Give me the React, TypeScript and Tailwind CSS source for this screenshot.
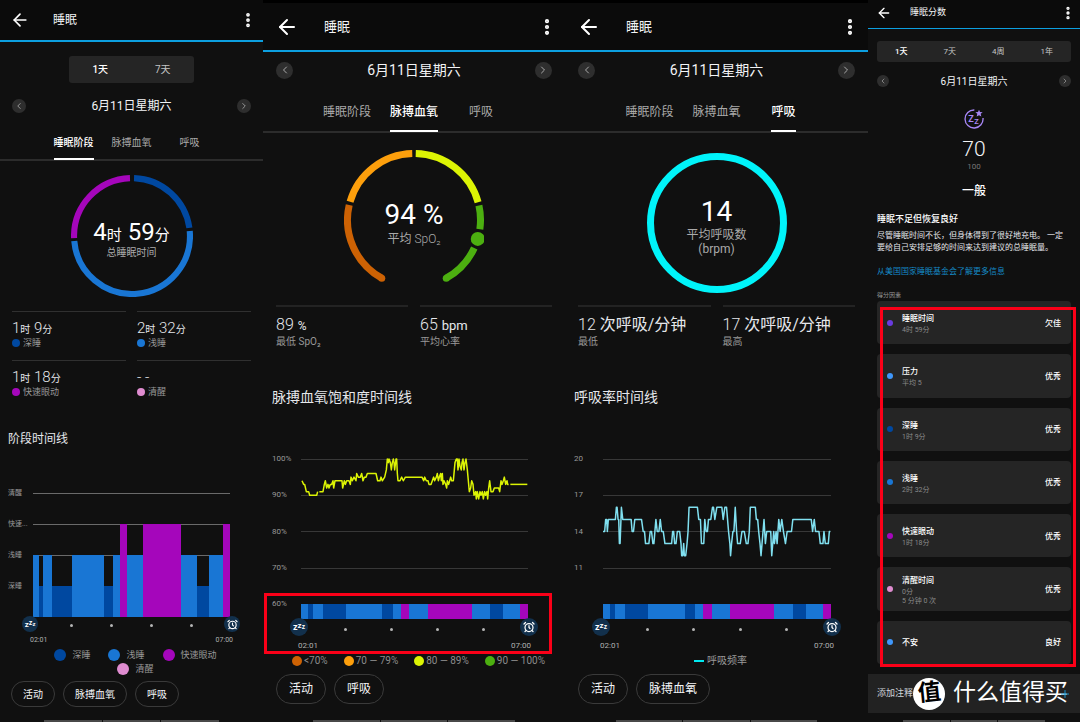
import { useState } from 'react';
import type { ReactNode } from 'react';
import clsx from 'clsx';
import { AlarmClock, ArrowLeft, ChevronLeft, ChevronRight, EllipsisVertical, Plus } from 'lucide-react';

type Size = 'sm' | 'md' | 'lg';
type Stage = 'deep' | 'light' | 'rem';

const COLORS = {
  deep: '#0048a0',
  light: '#1976d4',
  rem: '#a506bb',
  awake: '#df8cd0',
};

// [stage, end] on a 0..591 axis covering 02:01 - 07:00
const STAGES: [Stage, number][] = [
  ['light', 17],
  ['deep', 31],
  ['light', 58],
  ['deep', 117],
  ['light', 212],
  ['deep', 239],
  ['light', 260],
  ['rem', 282],
  ['light', 330],
  ['rem', 444],
  ['light', 492],
  ['deep', 527],
  ['light', 570],
  ['rem', 591],
];

const SPO2 = [
  '120,94 125,93 128,93 133,91 140,91 143,90 164,90 167,91',
  '172,91 183,91 187,93 190,94 194,92 198,93 201,92 205,93 209,93 213,94 215,92 219,94 240,94 242,92 247,94 250,93 254,94 261,94 265,93 267,95 271,94 276,95 282,94 284,96 289,95 295,95 299,96 303,94 307,95 312,95 316,96 342,96 347,94 354,94 357,95 361,94 368,95 373,97 376,100 379,99 381,100 385,99 388,97 391,99 394,100 396,99 398,97 402,100 404,100 406,96 408,94 414,94 419,95 424,94 430,95 480,95 485,94 488,95 493,94 498,94 501,93 507,93 511,94 515,95 518,94 523,95 526,96 529,94 532,95 536,96 538,94 541,96 543,93 546,94 551,93 554,92 556,94 560,93 566,95 569,94 574,94 577,97 579,99 583,100 586,100 588,97 591,100 594,98 598,97 600,99 603,100 606,97 609,99 612,100 616,97 619,94 622,91 626,92 629,94 633,93 636,90 641,91 643,89 646,91 650,89 654,91 657,90 661,91 664,89 668,91 671,90 675,91 677,89 680,92 683,94 687,91 693,91 697,92 710,92 713,91 717,94 720,93 724,94 727,95 731,93 735,94 737,93 740,93',
  '745,93 796,93',
];

const BREATHS = [
  '123,14 128,14 131,15 134,15 136,14 139,15 160,15 163,16 165,16 168,15 170,15 172,13 174,13 178,16 182,15 207,15 210,14 214,14 218,15 238,15 243,14 247,14 250,13 260,13 264,14 268,14 272,13 275,13 281,15 285,14 290,14 294,15 298,14 303,14 308,13 328,13 331,14 334,14 337,13 341,13 345,14 352,14 356,13 358,12 361,12 364,13 366,12 370,12 374,13 377,14 380,16 405,16 409,15 414,15 417,13 424,13 427,15 431,14 435,14 438,15 445,15 450,16 453,16 457,15 463,16 478,16 482,15 487,16 492,16 495,15 498,14 502,13 504,12 507,13 511,14 514,14 518,16 522,14 525,13 533,13 538,14 545,14 551,13 556,13 560,14 563,16 578,16 581,15 585,15 588,14 592,13 595,12 598,13 604,15 608,13 612,14 624,14 627,12 633,14 635,13 640,14 643,13 648,15 652,14 657,15 662,14 668,13 673,14 686,14 690,15 745,15 749,14 754,15 758,14 768,14 772,13 780,13 783,14 787,13 796,13 799,14 802,14',
];

const FACTORS = [
  { name: '睡眠时间', details: ['4时 59分'], rating: '欠佳', color: '#6a3be0' },
  { name: '压力', details: ['平均 5'], rating: '优秀', color: '#3f97fb' },
  { name: '深睡', details: ['1时 9分'], rating: '优秀', color: COLORS.deep },
  { name: '浅睡', details: ['2时 32分'], rating: '优秀', color: COLORS.light },
  { name: '快速眼动', details: ['1时 18分'], rating: '优秀', color: COLORS.rem },
  { name: '清醒时间', details: ['0分', '5 分钟 0 次'], rating: '优秀', color: COLORS.awake },
  { name: '不安', details: [], rating: '良好', color: '#3f97fb' },
];

function Screen({ children }: { children: ReactNode }) {
  return <section className="flex min-w-0 flex-col bg-[#101010]">{children}</section>;
}

function Header({ title, size }: { title: string; size: Size }) {
  return (
    <header
      className={clsx(
        'flex shrink-0 items-center border-[#0c9fe0] bg-[#0b0b0b] text-gray-100',
        size === 'lg' && 'h-[52px] border-b-2 pt-[3px] pr-2 pl-3 text-[13px] shadow-[inset_0_3px_0_#000]',
        size === 'md' && 'h-[42px] border-b-2 pr-1.5 pl-2.5 text-xs',
        size === 'sm' && 'h-[29px] border-b pr-1 pl-2 pb-[3px] text-[9px]'
      )}
    >
      <button aria-label="返回" className="text-white">
        <ArrowLeft className={clsx(size === 'lg' && 'size-6', size === 'md' && 'size-5', size === 'sm' && 'size-4')} />
      </button>
      <h1 className={clsx('flex-1', size === 'lg' && 'ml-[25px]', size === 'md' && 'ml-[23px]', size === 'sm' && 'ml-[18px]')}>
        {title}
      </h1>
      <button aria-label="更多" className="text-white">
        <EllipsisVertical
          strokeWidth={3}
          className={clsx(size === 'lg' && 'size-5', size === 'md' && 'size-[18px]', size === 'sm' && 'size-4')}
        />
      </button>
    </header>
  );
}

function Segments({ items, className }: { items: string[]; className: string }) {
  const [active, setActive] = useState(0);
  return (
    <div className={clsx('flex shrink-0 rounded-[3px] bg-[#252525]', className)}>
      {items.map((item, i) => (
        <button
          key={item}
          onClick={() => setActive(i)}
          className={clsx('flex-1', i === active ? 'font-medium text-white' : 'text-[#c4c4c4]')}
        >
          {item}
        </button>
      ))}
    </div>
  );
}

function DateRow({ size, className }: { size: Size; className: string }) {
  const round = clsx(
    'flex items-center justify-center rounded-full bg-[#2e2e2e] text-[#aaa]',
    size === 'lg' && 'size-[17px]',
    size === 'md' && 'size-[14px]',
    size === 'sm' && 'size-3'
  );
  const icon = size === 'lg' ? 'size-3' : size === 'md' ? 'size-2.5' : 'size-2';
  return (
    <div className={clsx('flex shrink-0 items-center justify-between text-gray-100', className)}>
      <button aria-label="前一天" className={round}>
        <ChevronLeft className={icon} />
      </button>
      <span>6月11日星期六</span>
      <button aria-label="后一天" className={round}>
        <ChevronRight className={icon} />
      </button>
    </div>
  );
}

function Tabs({ active, size }: { active: number; size: Size }) {
  return (
    <nav
      className={clsx(
        'mt-3 flex shrink-0 justify-center border-b-2 border-[#2c2c2c] leading-[25px]',
        size === 'lg' ? 'h-[33px] text-xs' : 'h-[31px] text-[10px]'
      )}
    >
      {['睡眠阶段', '脉搏血氧', '呼吸'].map((tab, i) => (
        <div key={tab} className={clsx('-mb-px flex justify-center', size === 'lg' ? 'w-[67px]' : 'w-[58px]')}>
          <a
            href="#"
            className={clsx(
              'border-b-2 whitespace-nowrap',
              i === active ? 'border-white font-medium text-white' : 'border-transparent text-[#aaa]'
            )}
          >
            {tab}
          </a>
        </div>
      ))}
    </nav>
  );
}

const point = (r: number, deg: number) => {
  const a = (deg * Math.PI) / 180;
  return [70 + r * Math.sin(a), 70 - r * Math.cos(a)];
};

// angles run clockwise from 12 o'clock
function Arc({ from, to, r = 66.5, width = 7, color }: { from: number; to: number; r?: number; width?: number; color: string }) {
  const [x1, y1] = point(r, from);
  const [x2, y2] = point(r, to);
  return (
    <path
      d={`M${x1} ${y1}A${r} ${r} 0 ${to - from > 180 ? 1 : 0} 1 ${x2} ${y2}`}
      fill="none"
      stroke={color}
      strokeWidth={width}
    />
  );
}

function Dial({ size, className, drawing, children }: { size: Size; className: string; drawing: ReactNode; children: ReactNode }) {
  return (
    <div className={clsx('grid shrink-0 place-items-center self-center', className)}>
      <svg viewBox="0 0 140 140" className={clsx('col-start-1 row-start-1', size === 'lg' ? 'size-[140px]' : 'size-[122px]')}>
        {drawing}
      </svg>
      <div className="col-start-1 row-start-1 flex flex-col items-center pt-[5px] text-white">{children}</div>
    </div>
  );
}

function Dot({ color, className }: { color: string; className: string }) {
  return <span className={clsx('shrink-0 rounded-full', className)} style={{ backgroundColor: color }} />;
}

function Duration({ parts }: { parts: [string, string][] }) {
  return (
    <>
      {parts.map(([n, unit], i) => (
        <span key={unit}>
          {i > 0 && ' '}
          {n}
          <span className="text-[10px] leading-none font-normal">{unit}</span>
        </span>
      ))}
    </>
  );
}

function StageStat({ value, label, color }: { value: ReactNode; label: string; color: string }) {
  return (
    <div className="border-t border-[#303030] pt-[7px]">
      <p className="text-[15px] leading-[18px] font-light whitespace-pre text-gray-200">{value}</p>
      <p className="flex items-center gap-[3px] text-[9px] leading-3 text-[#999]">
        <Dot color={color} className="size-2" />
        {label}
      </p>
    </div>
  );
}

function Stat({ value, label }: { value: ReactNode; label: string }) {
  return (
    <div className="border-t-2 border-[#232323] pt-2">
      <p className="text-base leading-5 font-light whitespace-nowrap text-gray-200">{value}</p>
      <p className="text-[10px] leading-[14px] text-[#999]">{label}</p>
    </div>
  );
}

function SleepTimes({ size }: { size: Size }) {
  const badge = clsx(
    'absolute flex items-center justify-center rounded-full bg-[#12304c] text-white',
    size === 'lg' ? '-top-px size-[18px]' : '-top-px size-4'
  );
  return (
    <>
      <div className={clsx('relative flex items-center justify-evenly', size === 'lg' ? 'h-[21px]' : 'h-[17px]')}>
        <span className={clsx(badge, '-left-[11px]')}>
          <svg viewBox="0 0 18 18" className="size-full font-bold" fill="currentColor">
            <text x="3" y="12.4" fontSize="9">z</text>
            <text x="7.6" y="9.6" fontSize="8">z</text>
            <text x="11.8" y="11" fontSize="6.5">z</text>
          </svg>
        </span>
        {[0, 1, 2, 3].map((i) => (
          <Dot key={i} color="#b5b5b5" className="size-[3px]" />
        ))}
        <span className={clsx(badge, '-right-[10px]')}>
          <AlarmClock strokeWidth={2.5} className={size === 'lg' ? 'size-3' : 'size-[11px]'} />
        </span>
      </div>
      <div className={clsx('-mx-[3px] flex justify-between leading-3 text-[#b0b0b0]', size === 'lg' ? 'text-[8px]' : 'text-[7px]')}>
        <span>02:01</span>
        <span>07:00</span>
      </div>
    </>
  );
}

function AxisLabels({ items, className }: { items: string[]; className: string }) {
  return (
    <div className={clsx('flex shrink-0 flex-col justify-between leading-[8px] text-[#999]', className)}>
      {items.map((item) => (
        <span key={item} className="h-2 whitespace-nowrap">
          {item}
        </span>
      ))}
    </div>
  );
}

function StageChart() {
  const top = { deep: 93, light: 62, rem: 31 };
  return (
    <svg viewBox="0 0 591 124" preserveAspectRatio="none" className="my-1 h-[124px] w-full min-w-0" shapeRendering="crispEdges">
      {[0, 31, 62].map((y) => (
        <rect key={y} x="0" y={y} width="591" height="1" fill="#6a6a6a" />
      ))}
      {STAGES.map(([stage, end], i) => {
        const start = i ? STAGES[i - 1][1] : 0;
        return <rect key={end} x={start} y={top[stage]} width={end - start} height={124 - top[stage]} fill={COLORS[stage]} />;
      })}
    </svg>
  );
}

function StageStrip() {
  return (
    <svg viewBox="0 0 591 15" preserveAspectRatio="none" className="block h-[15px] w-full" shapeRendering="crispEdges">
      {STAGES.map(([stage, end], i) => {
        const start = i ? STAGES[i - 1][1] : 0;
        return <rect key={end} x={start} y="0" width={end - start} height="15" fill={COLORS[stage]} />;
      })}
    </svg>
  );
}

function LineChart({ series, start, max, min, color }: { series: string[]; start: number; max: number; min: number; color: string }) {
  const toPoints = (s: string) =>
    s
      .split(' ')
      .map((p) => {
        const [x, v] = p.split(',').map(Number);
        return `${x - start},${((max - v) / (max - min)) * 145}`;
      })
      .join(' ');
  return (
    <svg viewBox="0 0 681 145" preserveAspectRatio="none" className="my-1 h-[145px] w-full min-w-0 overflow-visible">
      {[0, 36, 72, 109].map((y) => (
        <rect key={y} x="0" y={y} width="681" height="1" fill="#383838" />
      ))}
      {series.map((s) => (
        <polyline
          key={s}
          points={toPoints(s)}
          fill="none"
          stroke={color}
          strokeWidth="1.5"
          strokeLinejoin="round"
          vectorEffect="non-scaling-stroke"
        />
      ))}
    </svg>
  );
}

function Timeline({ labels, chart, marked }: { labels: string[]; chart: ReactNode; marked?: boolean }) {
  return (
    <div className="mt-12 pr-[37px] pl-[9px]">
      <div className="flex h-[153px]">
        <AxisLabels items={labels} className="w-[29px] text-[8px]" />
        {chart}
      </div>
      <div className="relative -mt-1 ml-[29px]">
        <StageStrip />
        <SleepTimes size="lg" />
        {marked && <div className="absolute -top-[11px] -right-6 -bottom-[2px] -left-[37px] border-3 border-[#fb0018]" />}
      </div>
    </div>
  );
}

function Chips({ items, size }: { items: string[]; size: Size }) {
  return (
    <div className={clsx('flex shrink-0 gap-2', size === 'lg' ? 'mt-[7px] px-[13px] text-xs' : 'mt-[5px] px-[11px] text-[10px]')}>
      {items.map((item) => (
        <button
          key={item}
          className={clsx('rounded-full border border-[#3a3a3a] text-gray-100', size === 'lg' ? 'h-[30px] px-3' : 'h-[26px] px-[11px]')}
        >
          {item}
        </button>
      ))}
    </div>
  );
}

function SystemBar() {
  return (
    <div className="mx-auto mt-auto grid h-[2px] w-2/3 grid-cols-3 gap-px">
      <span className="bg-[#484848]" />
      <span className="bg-[#484848]" />
      <span className="bg-[#484848]" />
    </div>
  );
}

function StagesScreen() {
  return (
    <Screen>
      <Header title="睡眠" size="md" />
      <Segments items={['1天', '7天']} className="mt-[14px] h-[27px] w-[125px] self-center text-[10px]" />
      <DateRow size="md" className="mt-[11px] h-6 px-3 text-xs" />
      <Tabs active={0} size="md" />
      <Dial
        size="md"
        className="mt-[14px]"
        drawing={
          <>
            <Arc from={2} to={82} color={COLORS.deep} />
            <Arc from={85} to={265} color={COLORS.light} />
            <Arc from={268} to={358} color={COLORS.rem} />
          </>
        }
      >
        <p className="text-2xl leading-7">
          4<span className="text-[15px] leading-none">时</span> 59<span className="text-[15px] leading-none">分</span>
        </p>
        <p className="text-[10px] leading-[14px] text-[#aaa]">总睡眠时间</p>
      </Dial>
      <div className="mt-[14px] grid grid-cols-2 gap-[11px] px-3">
        <StageStat value={<Duration parts={[['1', '时'], ['9', '分']]} />} label="深睡" color={COLORS.deep} />
        <StageStat value={<Duration parts={[['2', '时'], ['32', '分']]} />} label="浅睡" color={COLORS.light} />
        <StageStat value={<Duration parts={[['1', '时'], ['18', '分']]} />} label="快速眼动" color={COLORS.rem} />
        <StageStat value="- -" label="清醒" color={COLORS.awake} />
      </div>
      <h2 className="mt-8 px-2 text-xs leading-[18px] text-gray-200">阶段时间线</h2>
      <div className="mt-[41px] pr-[33px] pl-2">
        <div className="flex h-[132px]">
          <AxisLabels items={['清醒', '快速...', '浅睡', '深睡', '']} className="w-[25px] text-[7px]" />
          <StageChart />
        </div>
        <div className="-mt-1 ml-[25px]">
          <SleepTimes size="md" />
        </div>
      </div>
      <ul className="mt-[2px] flex flex-wrap justify-center gap-x-[18px] pr-7 pl-9 text-[9px] leading-[14px] text-[#999]">
        {[
          ['深睡', COLORS.deep],
          ['浅睡', COLORS.light],
          ['快速眼动', COLORS.rem],
          ['清醒', COLORS.awake],
        ].map(([label, color]) => (
          <li key={label} className="flex items-center gap-1.5">
            <Dot color={color} className="size-3" />
            {label}
          </li>
        ))}
      </ul>
      <Chips items={['活动', '脉搏血氧', '呼吸']} size="md" />
      <SystemBar />
    </Screen>
  );
}

function OxygenScreen() {
  const [capX, capY] = point(66.5, 151);
  const [capX2, capY2] = point(66.5, 209);
  const [ballX, ballY] = point(66.5, 106.5);
  return (
    <Screen>
      <Header title="睡眠" size="lg" />
      <DateRow size="lg" className="h-9 px-[13px] text-sm" />
      <Tabs active={1} size="lg" />
      <Dial
        size="lg"
        className="mt-[17px]"
        drawing={
          <>
            <Arc from={209} to={283} color="#cd6204" />
            <circle cx={capX2} cy={capY2} r="3.5" fill="#cd6204" />
            <Arc from={286} to={358.5} color="#fd9f0c" />
            <Arc from={1.5} to={74.5} color="#dcf404" />
            <Arc from={77.5} to={98} color="#4caf10" />
            <circle cx={ballX} cy={ballY} r="7" fill="#4caf10" />
            <Arc from={115} to={151} color="#4caf10" />
            <circle cx={capX} cy={capY} r="3.5" fill="#4caf10" />
          </>
        }
      >
        <p className="text-[28px] leading-8">94 %</p>
        <p className="text-xs leading-4 text-[#aaa]">
          平均 <span className="font-light">SpO₂</span>
        </p>
      </Dial>
      <div className="mt-[15px] grid grid-cols-2 gap-3 px-[13px]">
        <Stat value={<>89 <span className="text-xs leading-none font-normal">%</span></>} label="最低 SpO₂" />
        <Stat value={<>65 <span className="text-[13px] leading-none font-normal">bpm</span></>} label="平均心率" />
      </div>
      <h2 className="mt-[38px] px-[9px] text-sm leading-5 text-gray-200">脉搏血氧饱和度时间线</h2>
      <Timeline
        labels={['100%', '90%', '80%', '70%', '60%']}
        chart={<LineChart series={SPO2} start={117} max={100} min={60} color="#dcf404" />}
        marked
      />
      <ul className="mt-[3px] flex gap-4 pl-[29px] text-[10px] leading-3 whitespace-nowrap text-[#8c8c8c]">
        {[
          ['<70%', '#cd6204'],
          ['70 — 79%', '#fd9f0c'],
          ['80 — 89%', '#dcf404'],
          ['90 — 100%', '#4caf10'],
        ].map(([label, color]) => (
          <li key={label} className="flex items-center gap-0.5">
            <Dot color={color} className="size-2.5" />
            {label}
          </li>
        ))}
      </ul>
      <Chips items={['活动', '呼吸']} size="lg" />
      <SystemBar />
    </Screen>
  );
}

function BreathStat({ rate, label }: { rate: number; label: string }) {
  return (
    <Stat
      value={
        <>
          {rate} <span className="font-normal">次呼吸/分钟</span>
        </>
      }
      label={label}
    />
  );
}

function BreathingScreen() {
  return (
    <Screen>
      <Header title="睡眠" size="lg" />
      <DateRow size="lg" className="h-9 px-[13px] text-sm" />
      <Tabs active={2} size="lg" />
      <Dial
        size="lg"
        className="mt-5"
        drawing={<circle cx="70" cy="70" r="66.5" fill="none" stroke="#00f4fa" strokeWidth="7" />}
      >
        <p className="text-[28px] leading-8">14</p>
        <p className="text-center text-xs leading-[14px] text-[#aaa]">
          平均呼吸数
          <br />
          (brpm)
        </p>
      </Dial>
      <div className="mt-3 grid grid-cols-2 gap-3 px-[13px]">
        <BreathStat rate={12} label="最低" />
        <BreathStat rate={17} label="最高" />
      </div>
      <h2 className="mt-[38px] px-[9px] text-sm leading-5 text-gray-200">呼吸率时间线</h2>
      <Timeline
        labels={['20', '17', '14', '11', '']}
        chart={<LineChart series={BREATHS} start={123} max={20} min={8} color="#80e0f0" />}
      />
      <p className="mt-[3px] flex items-center justify-center gap-[3px] pl-2 text-[10px] leading-3 text-[#999]">
        <span className="h-[2px] w-2.5 bg-[#00e8f0]" />
        呼吸频率
      </p>
      <Chips items={['活动', '脉搏血氧']} size="lg" />
      <SystemBar />
    </Screen>
  );
}

function ScoreScreen() {
  return (
    <Screen>
      <Header title="睡眠分数" size="sm" />
      <Segments items={['1天', '7天', '4周', '1年']} className="mx-[9px] mt-3 h-[21px] text-[8px]" />
      <DateRow size="sm" className="mx-[9px] mt-[11px] h-4 text-[10px]" />
      <div className="mt-5 flex flex-col items-center">
        <svg viewBox="0 0 60 60" className="size-5" fill="#a887f5">
          <path d="M31 3A27 27 0 1 0 57 27" fill="none" stroke="#a887f5" strokeWidth="4" />
          <path d="M45 2l3 7 8 .5-6 5 2 8-7-4-7 4 2-8-6-5 8-.5z" />
          <text x="13" y="38" fontSize="27" fontWeight="700">Z</text>
          <text x="31" y="44" fontSize="22" fontWeight="700">Z</text>
        </svg>
        <p className="mt-2 text-[21px] leading-6 font-light text-gray-100">70</p>
        <p className="text-[8px] leading-3 text-[#777]">100</p>
        <p className="mt-2.5 text-xs leading-4 font-medium text-white">一般</p>
      </div>
      <div className="mt-[14px] px-[9px] text-[8px] leading-3 text-gray-200">
        <h2 className="text-[9px] font-medium text-white">睡眠不足但恢复良好</h2>
        <p className="mt-[5px] whitespace-nowrap">
          尽管睡眠时间不长，但身体得到了很好地充电。 一定
          <br />
          要给自己安排足够的时间来达到建议的总睡眠量。
        </p>
        <a href="#" className="mt-3 block text-[#1589c4]">
          从美国国家睡眠基金会了解更多信息
        </a>
        <h3 className="mt-[13px] text-[6px] leading-2 text-[#999]">得分因素</h3>
      </div>
      <div className="relative mx-[9px] mt-[2px] flex flex-1">
        <ul className="grid flex-1 auto-rows-fr gap-2.5">
          {FACTORS.map((f) => (
            <li key={f.name} className="flex items-center rounded-[4px] bg-[#252525] px-2.5 text-[8px]">
              <Dot color={f.color} className="size-1.5" />
              <div className="ml-[9px] flex-1 pt-[2px]">
                <p className="leading-[14px] font-medium text-white">{f.name}</p>
                {f.details.map((d) => (
                  <p key={d} className="text-[7px] leading-[9px] text-[#8a8a8a]">
                    {d}
                  </p>
                ))}
              </div>
              <span className="pt-[2px] font-medium text-white">{f.rating}</span>
            </li>
          ))}
        </ul>
        <div className="pointer-events-none absolute top-[6px] -right-[5px] -bottom-[3px] left-[3px] border-3 border-[#fb0018]" />
      </div>
      <footer className="relative mt-2.5 mb-[7px] flex h-[39px] shrink-0 items-center justify-between bg-[#222] px-[9px] text-[9px] text-gray-300">
        添加注释
        <button aria-label="添加" className="z-10 text-[#1593d0]">
          <Plus className="size-3" />
        </button>
        <div className="absolute inset-y-0 right-3 flex items-center gap-2 text-white">
          <span className="flex size-8 items-center justify-center rounded-full bg-white text-[23px] font-bold text-black">
            <span className="-rotate-6">值</span>
          </span>
          <span className="text-[23px] whitespace-nowrap">什么值得买</span>
        </div>
      </footer>
      <SystemBar />
    </Screen>
  );
}

export default function App() {
  return (
    <main className="grid min-h-screen grid-cols-[263fr_302fr_303fr_212fr] bg-[#101010] font-[family-name:Roboto,'Noto_Sans_CJK_SC',sans-serif]">
      <StagesScreen />
      <OxygenScreen />
      <BreathingScreen />
      <ScoreScreen />
    </main>
  );
}
